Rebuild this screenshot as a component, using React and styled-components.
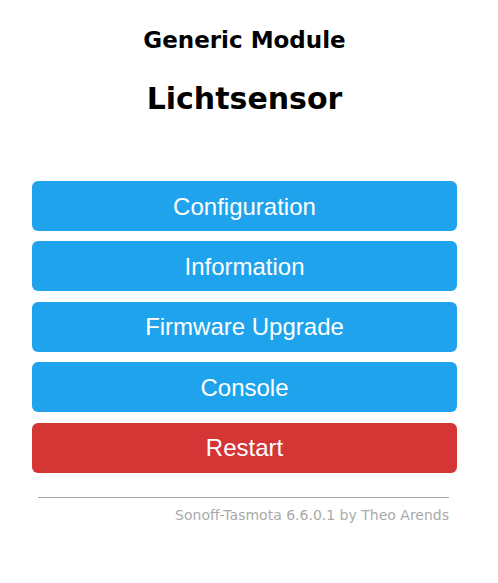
import React from "react";
import styled, { createGlobalStyle } from "styled-components";

const GlobalStyle = createGlobalStyle`
  html, body {
    margin: 0;
    padding: 0;
    background: #fff;
  }
  body {
    font-family: "DejaVu Sans", Verdana, sans-serif;
  }
`;

const Page = styled.div`
  padding: 27px 0 0 32px;
`;

const Panel = styled.div`
  width: 425px;
  display: flex;
  flex-direction: column;
`;

const ModuleName = styled.h3`
  margin: 0;
  text-align: center;
  font-size: 23px;
  font-weight: bold;
  line-height: 27px;
  color: #000;
`;

const DeviceName = styled.h2`
  margin: 27px 0 0;
  text-align: center;
  font-size: 30px;
  font-weight: bold;
  line-height: 35px;
  color: #000;
`;

const Menu = styled.div`
  display: flex;
  flex-direction: column;
  gap: 10.4px;
  margin-top: 65px;
`;

const Button = styled.button`
  display: block;
  width: 100%;
  height: 50px;
  border: 0;
  border-radius: 6px;
  padding: 0;
  background: ${props => (props.danger ? "#d43535" : "#1fa3ec")};
  color: #fff;
  font-family: "Liberation Sans", Arial, sans-serif;
  font-size: 24px;
  line-height: 49px;
  cursor: pointer;
`;

const Footer = styled.div`
  margin: 24.5px 8px 0 6px;
  text-align: right;
  font-size: 14px;
`;

const Rule = styled.hr`
  margin: 0;
  border: 0;
  border-top: 1px solid #a4a4a4;
  height: 0;
`;

const FooterLink = styled.a`
  display: block;
  margin-top: 9.3px;
  color: #aaa;
  text-decoration: none;
  line-height: normal;
`;

const menuItems = [
  "Configuration",
  "Information",
  "Firmware Upgrade",
  "Console",
];

export default function App() {
  return (
    <>
      <GlobalStyle />
      <Page>
        <Panel>
          <ModuleName>Generic Module</ModuleName>
          <DeviceName>Lichtsensor</DeviceName>
          <Menu>
            {menuItems.map(label => (
              <Button key={label}>{label}</Button>
            ))}
            <Button danger>Restart</Button>
          </Menu>
          <Footer>
            <Rule />
            <FooterLink href="#">Sonoff-Tasmota 6.6.0.1 by Theo Arends</FooterLink>
          </Footer>
        </Panel>
      </Page>
    </>
  );
}
